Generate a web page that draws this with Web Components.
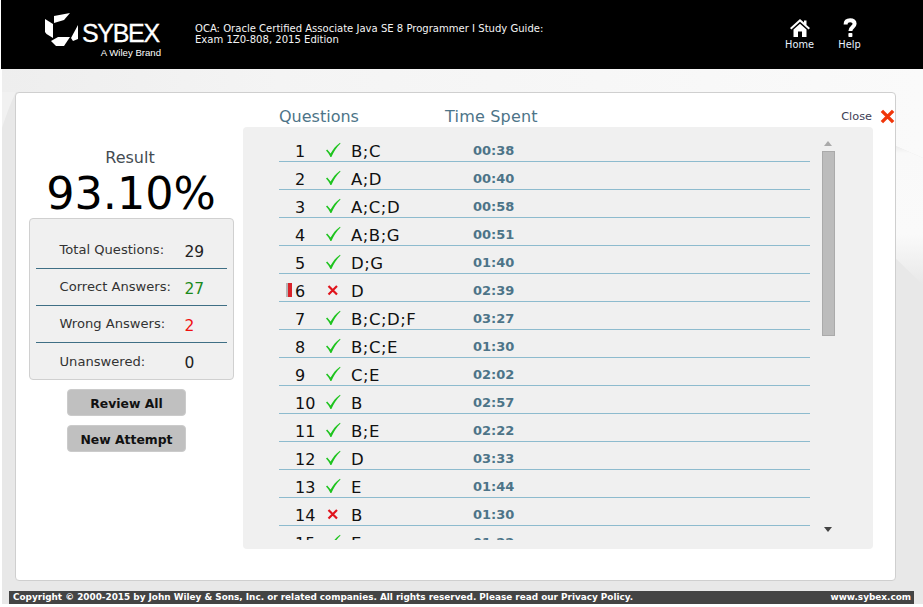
<!DOCTYPE html>
<html>
<head>
<meta charset="utf-8">
<title>Result</title>
<style>
  html, body { margin: 0; height: 100%; background: #fff; }
  body { font-family: "DejaVu Sans", Verdana, sans-serif; }
</style>
</head>
<body>
<exam-app>
  <top-bar>
    <span slot="title">OCA: Oracle Certified Associate Java SE 8 Programmer I Study Guide:<br>Exam 1Z0-808, 2015 Edition</span>
  </top-bar>
  <result-card>
    <score-panel slot="left" percent="93.10%">
      <stat-row label="Total Questions:" value="29"></stat-row>
      <stat-row label="Correct Answers:" value="27" tone="good"></stat-row>
      <stat-row label="Wrong Answers:" value="2" tone="bad"></stat-row>
      <stat-row label="Unanswered:" value="0" last></stat-row>
    </score-panel>
    <question-list slot="right"></question-list>
  </result-card>
  <page-footer></page-footer>
</exam-app>

<script>
const appTemplate = document.createElement('template');
appTemplate.innerHTML = `
  <style>
    :host {
      display: block;
      position: relative;
      width: 923px;
      height: 607px;
      overflow: hidden;
      background: #fff;
    }
    .back {
      position: absolute;
      left: 2px;
      top: 0;
      width: 921px;
      height: 604px;
    }
    .stack {
      position: relative;
      display: flex;
      flex-direction: column;
      height: 100%;
    }
  </style>
  <svg class="back" viewBox="0 0 921 604" preserveAspectRatio="none">
    <defs>
      <linearGradient id="fade" x1="0" y1="0" x2="0" y2="1">
        <stop offset="0" stop-color="#e0e0e0"/>
        <stop offset=".09" stop-color="#f9f9f9"/>
        <stop offset=".65" stop-color="#fafafa"/>
        <stop offset="1" stop-color="#e8e8e8"/>
      </linearGradient>
      <linearGradient id="top" x1="0" y1="0" x2="1" y2="0">
        <stop offset="0" stop-color="#eeeeee"/>
        <stop offset=".3" stop-color="#f4f4f4"/>
        <stop offset="1" stop-color="#fafafa"/>
      </linearGradient>
    </defs>
    <rect width="921" height="604" fill="#e8e8e8"/>
    <path d="M0 69 H921 V158 L880 140 V92 H0 Z" fill="url(#top)"/>
    <path d="M0 92 V128 C6 110 10 100 14 92 Z" fill="#f1f1f1"/>
    <path d="M880 140 L921 158 V285 L880 245 Z" fill="url(#fade)"/>
  </svg>
  <div class="stack"><slot></slot></div>
`;

class ExamApp extends HTMLElement {
  constructor() {
    super();
    this.attachShadow({ mode: 'open' });
    this.shadowRoot.appendChild(appTemplate.content.cloneNode(true));
  }
}

const topBarTemplate = document.createElement('template');
topBarTemplate.innerHTML = `
  <style>
    :host {
      display: flex;
      align-items: flex-start;
      height: 69px;
      margin-left: 1px;
      background: #000;
      color: #fff;
      flex: none;
    }
    .logo {
      width: 118px;
      margin: 13px 0 0 43px;
      display: flex;
      flex-wrap: wrap;
      justify-content: flex-end;
      flex: none;
    }
    .logo svg { flex: none; width: 34px; height: 34px; }
    .word {
      font: 400 25px/34px "Liberation Sans", sans-serif;
      -webkit-text-stroke: .3px #fff;
      letter-spacing: -1.3px;
      margin-left: 3px;
      width: 80px;
      padding-top: 3px;
      box-sizing: border-box;
    }
    .brand {
      width: 100%;
      font: 400 9.6px/10px "Liberation Sans", sans-serif;
      text-align: right;
      margin-top: -2px;
      padding-right: 1px;
      box-sizing: border-box;
    }
    .title {
      margin: 23px 0 0 33px;
      font-size: 10.05px;
      line-height: 11px;
      width: 540px;
      color: #f4f4f4;
      white-space: nowrap;
      flex: none;
    }
    .nav { display: flex; margin-left: 39.5px; }
    .nav a {
      display: flex;
      flex-direction: column;
      align-items: center;
      width: 50px;
      height: 50px;
      justify-content: flex-end;
      font-size: 9.8px;
      line-height: 11px;
      color: #e8f2ff;
    }
    .nav svg { width: 20px; height: 20px; margin-bottom: 1px; }
  </style>
  <div class="logo">
    <svg viewBox="0 0 34 34">
      <path fill="#fff" d="M0 6 L8 11 L8 25 L1.5 21 L0 19 Z"/>
      <path fill="#fff" d="M9 3 L25 0 L19 7 L9 10 Z"/>
      <path fill="#fff" d="M6 28 L13 24 L25 24 L19 33 L11 33 Z"/>
      <path fill="#fff" d="M26 25 L33 12 L33 26 L28 28 Z"/>
    </svg>
    <span class="word">SYBEX</span>
    <span class="brand">A Wiley Brand</span>
  </div>
  <div class="title"><slot name="title"></slot></div>
  <div class="nav">
    <a>
      <svg viewBox="0 0 20 20">
        <path fill="#fff" d="M10 1 L14 4.6 V2.5 H16.5 V6.9 L20 10 L18.6 11.4 L10 3.8 L1.4 11.4 L0 10 Z"/>
        <path fill="#fff" d="M3.5 11.5 L10 5.8 L16.5 11.5 V19 H12 V13.5 H8 V19 H3.5 Z"/>
      </svg>
      Home
    </a>
    <a>
      <svg viewBox="0 0 20 20">
        <path fill="none" stroke="#fff" stroke-width="4" d="M5.6 6.6 C5.6 3.6 7.6 2.2 10.2 2.2 C12.8 2.2 14.6 3.6 14.6 5.8 C14.6 9 10.4 9 10.4 13"/>
        <rect fill="#fff" x="8.4" y="15" width="4" height="4" rx=".8"/>
      </svg>
      Help
    </a>
  </div>
`;

class TopBar extends HTMLElement {
  constructor() {
    super();
    this.attachShadow({ mode: 'open' });
    this.shadowRoot.appendChild(topBarTemplate.content.cloneNode(true));
  }
}

const cardTemplate = document.createElement('template');
cardTemplate.innerHTML = `
  <style>
    :host {
      display: flex;
      flex: none;
      box-sizing: border-box;
      width: 881px;
      height: 489px;
      margin: 23px 0 0 15px;
      background: #fff;
      border: 1px solid #cfcfcf;
      border-radius: 4px;
    }
    .left { width: 227px; flex: none; }
    .right { flex: 1; }
  </style>
  <div class="left"><slot name="left"></slot></div>
  <div class="right"><slot name="right"></slot></div>
`;

class ResultCard extends HTMLElement {
  constructor() {
    super();
    this.attachShadow({ mode: 'open' });
    this.shadowRoot.appendChild(cardTemplate.content.cloneNode(true));
  }
}

const scoreTemplate = document.createElement('template');
scoreTemplate.innerHTML = `
  <style>
    :host {
      display: flex;
      flex-direction: column;
      align-items: center;
      padding: 55px 0 0 3px;
    }
    .label { font-size: 16px; line-height: 20px; color: #444b52; margin-left: -2px; }
    .percent { font-size: 44.5px; line-height: 52px; color: #000; }
    .box {
      box-sizing: border-box;
      width: 205px;
      height: 162px;
      margin-top: -2px;
      padding: 13px 6px 0;
      background: #f0f0f0;
      border: 1px solid #d0d0d0;
      border-radius: 4px;
    }
    .btn {
      box-sizing: border-box;
      display: flex;
      align-items: center;
      justify-content: center;
      width: 119px;
      height: 27px;
      margin-top: 9px;
      margin-left: -9px;
      padding-top: 2px;
      background: #c0c0c0;
      border: 1px solid #cbcbcb;
      border-radius: 4px;
      font-size: 12.4px;
      font-weight: 700;
      color: #111;
    }
  </style>
  <div class="label">Result</div>
  <div class="percent"></div>
  <div class="box"><slot></slot></div>
  <div class="btn">Review All</div>
  <div class="btn">New Attempt</div>
`;

class ScorePanel extends HTMLElement {
  constructor() {
    super();
    this.attachShadow({ mode: 'open' });
    this.shadowRoot.appendChild(scoreTemplate.content.cloneNode(true));
    this.shadowRoot.querySelector('.percent').textContent = this.getAttribute('percent');
  }
}

const statTemplate = document.createElement('template');
statTemplate.innerHTML = `
  <style>
    :host {
      display: flex;
      height: 37px;
      box-sizing: border-box;
      border-bottom: 1px solid #3f6f85;
      color: #333;
      align-items: center;
      padding-top: 2px;
    }
    :host([last]) { border-bottom: 0; }
    .name {
      width: 149px;
      padding-left: 24px;
      box-sizing: border-box;
      font-size: 13.1px;
      white-space: nowrap;
      flex: none;
      margin-top: -3px;
    }
    .val { font-size: 15.5px; color: #222; margin-top: 1px; }
    :host([tone="good"]) .val { color: #1b8a1b; }
    :host([tone="bad"]) .val { color: #f01010; }
  </style>
  <span class="name"></span><span class="val"></span>
`;

class StatRow extends HTMLElement {
  constructor() {
    super();
    this.attachShadow({ mode: 'open' });
    this.shadowRoot.appendChild(statTemplate.content.cloneNode(true));
    this.shadowRoot.querySelector('.name').textContent = this.getAttribute('label');
    this.shadowRoot.querySelector('.val').textContent = this.getAttribute('value');
  }
}

const listData = [
  ['1', 1, 'B;C', '00:38'], ['2', 1, 'A;D', '00:40'], ['3', 1, 'A;C;D', '00:58'],
  ['4', 1, 'A;B;G', '00:51'], ['5', 1, 'D;G', '01:40'], ['6', 0, 'D', '02:39', 1],
  ['7', 1, 'B;C;D;F', '03:27'], ['8', 1, 'B;C;E', '01:30'], ['9', 1, 'C;E', '02:02'],
  ['10', 1, 'B', '02:57'], ['11', 1, 'B;E', '02:22'], ['12', 1, 'D', '03:33'],
  ['13', 1, 'E', '01:44'], ['14', 0, 'B', '01:30'], ['15', 1, 'E', '01:22'],
];

const listTemplate = document.createElement('template');
listTemplate.innerHTML = `
  <style>
    :host { display: block; }
    .heads { display: flex; height: 34px; color: #4d7488; font-size: 16px; line-height: 20px; }
    .heads span { margin-top: 14px; }
    .q { margin-left: 36px; width: 166px; }
    .t { letter-spacing: .2px; }
    .close {
      margin-left: auto;
      display: flex;
      align-items: flex-start;
    }
    .close b { font-weight: 400; font-size: 11.3px; line-height: 20px; margin-right: 8px; color: #3d3d55; }
    .close svg { width: 15px; height: 15px; margin: 2px 0 0 0; }
    .panel {
      display: flex;
      width: 630px;
      height: 422px;
      background: #f0f0f0;
      border-radius: 4px;
      padding-top: 7px;
      box-sizing: border-box;
    }
    .rows {
      margin-left: 36px;
      width: 531px;
      height: 406px;
      overflow: hidden;
      flex: none;
    }
    .row {
      display: flex;
      height: 28px;
      padding-top: 8px;
      box-sizing: border-box;
      border-bottom: 1px solid #8dbbce;
      position: relative;
      align-items: center;
    }
    .num { width: 41px; padding-left: 16px; font-size: 16px; color: #111; flex: none; box-sizing: border-box; }
    .mark { width: 31px; height: 16px; flex: none; margin-top: -4px; }
    .mark svg { display: block; width: 16px; height: 16px; margin-left: 5px; }
    .ans { width: 122px; font-size: 16.5px; letter-spacing: .5px; color: #111; flex: none; }
    .time { font-size: 13px; font-weight: 700; color: #4d7488; margin-top: -3px; }
    .flag { position: absolute; left: 9px; top: 9px; width: 4px; height: 14px; background: #d9232a; box-shadow: -2px 0 0 #b5b5b5; }
    .bar { width: 14px; margin-left: 11px; display: flex; flex-direction: column; align-items: center; flex: none; }
    .up { width: 0; height: 0; border: 4px solid transparent; border-top: 0; border-bottom: 5px solid #aaa; margin-top: 7px; }
    .thumb { box-sizing: border-box; width: 13px; height: 185px; margin-top: 5px; background: #bcbcbc; border: 1px solid #aaa; }
    .down { width: 0; height: 0; border: 4px solid transparent; border-bottom: 0; border-top: 5px solid #444; margin-top: 191px; }
  </style>
  <div class="heads">
    <span class="q">Questions</span>
    <span class="t">Time Spent</span>
    <span class="close">
      <b>Close</b>
      <svg viewBox="0 0 16 16"><path fill="none" stroke="#f0360a" stroke-width="3.6" d="M2 2 L14 14 M14 2 L2 14"/></svg>
    </span>
  </div>
  <div class="panel">
    <div class="rows"></div>
    <div class="bar"><i class="up"></i><i class="thumb"></i><i class="down"></i></div>
  </div>
`;

const checkIcon = '<svg viewBox="0 0 16 16"><path fill="#1fc41f" d="M1 8.6 L2.2 7.6 L5.6 11.6 C7.8 7.6 10.6 4 15 .8 L15.5 1.4 C11.4 5.2 8.8 9.6 6.4 15 L5.4 15 C4.4 12.6 2.8 10.4 1 8.6 Z"/></svg>';
const crossIcon = '<svg viewBox="0 0 16 16"><path fill="none" stroke="#e0141c" stroke-width="2.2" d="M3.5 4 L12 12.5 M12 4 L3.5 12.5"/></svg>';

class QuestionList extends HTMLElement {
  constructor() {
    super();
    this.attachShadow({ mode: 'open' });
    this.shadowRoot.appendChild(listTemplate.content.cloneNode(true));
    const rows = this.shadowRoot.querySelector('.rows');
    rows.innerHTML = listData.map(([n, ok, ans, time, flag]) => `
      <div class="row">
        ${flag ? '<i class="flag"></i>' : ''}
        <span class="num">${n}</span>
        <span class="mark">${ok ? checkIcon : crossIcon}</span>
        <span class="ans">${ans}</span>
        <span class="time">${time}</span>
      </div>`).join('');
  }
}

const footerTemplate = document.createElement('template');
footerTemplate.innerHTML = `
  <style>
    :host {
      display: flex;
      justify-content: space-between;
      flex: none;
      width: 905px;
      height: 13px;
      margin: 10px 0 0 9px;
      padding: 0 3px 0 4px;
      box-sizing: border-box;
      background: #444;
      color: #fff;
      font-size: 8.9px;
      font-weight: 700;
      line-height: 13px;
      white-space: nowrap;
    }
  </style>
  <span>Copyright © 2000-2015 by John Wiley &amp; Sons, Inc. or related companies. All rights reserved. Please read our Privacy Policy.</span>
  <span>www.sybex.com</span>
`;

class PageFooter extends HTMLElement {
  constructor() {
    super();
    this.attachShadow({ mode: 'open' });
    this.shadowRoot.appendChild(footerTemplate.content.cloneNode(true));
  }
}

customElements.define('exam-app', ExamApp);
customElements.define('top-bar', TopBar);
customElements.define('result-card', ResultCard);
customElements.define('score-panel', ScorePanel);
customElements.define('stat-row', StatRow);
customElements.define('question-list', QuestionList);
customElements.define('page-footer', PageFooter);
</script>
</body>
</html>
